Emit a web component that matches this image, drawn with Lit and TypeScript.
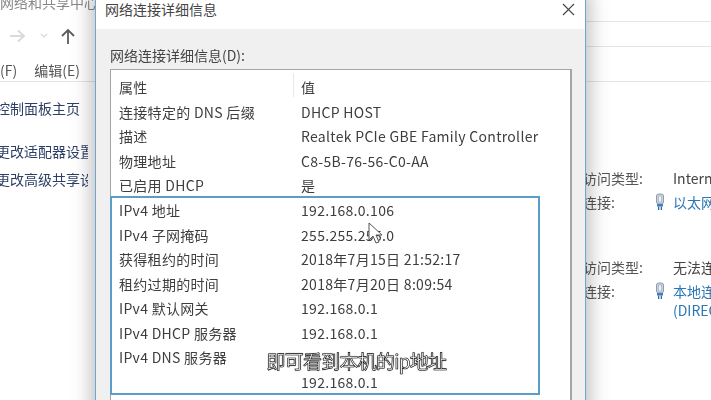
import { LitElement, html, css, svg } from "lit";
import { customElement } from "lit/decorators.js";

const topRows: [string, string][] = [
  ["连接特定的 DNS 后缀", "DHCP HOST"],
  ["描述", "Realtek PCIe GBE Family Controller"],
  ["物理地址", "C8-5B-76-56-C0-AA"],
  ["已启用 DHCP", "是"],
];
const selRows: [string, string][] = [
  ["IPv4 地址", "192.168.0.106"],
  ["IPv4 子网掩码", "255.255.255.0"],
  ["获得租约的时间", "2018年7月15日 21:52:17"],
  ["租约过期的时间", "2018年7月20日 8:09:54"],
  ["IPv4 默认网关", "192.168.0.1"],
  ["IPv4 DHCP 服务器", "192.168.0.1"],
  ["IPv4 DNS 服务器", ""],
  ["", "192.168.0.1"],
];

const plug = svg`<svg class="plug" viewBox="0 0 10 18" width="10" height="18">
  <rect x="1.5" y="1" width="7" height="10" rx="2" fill="#c9d3de" stroke="#8f9dae" stroke-width="1"/>
  <rect x="3.5" y="3" width="3" height="6" fill="#eef2f6" stroke="#9aa8b8" stroke-width=".6"/>
  <path d="M2 11h6v2.5H2z" fill="#3f7fc0"/>
  <path d="M3 13.5h1.3V17H3zM5.7 13.5H7V17H5.7z" fill="#2f6aa8"/>
</svg>`;

@customElement("app-root")
export class AppRoot extends LitElement {
  static styles = css`
    :host {
      display: block;
      position: relative;
      width: 711px;
      height: 400px;
      overflow: hidden;
      background: #fff;
      font-family: "Noto Sans CJK SC", "Liberation Sans", sans-serif;
      font-size: 14px;
      color: #3a3a3a;
    }
    .scene { width: 711px; height: 400px; filter: blur(0.35px); }
    .explorer { display: flex; flex-direction: column; width: 711px; height: 400px; }
    .wintitle {
      height: 22px; flex: none; box-sizing: border-box; overflow: hidden; line-height: 14px; color: #888;
      background: linear-gradient(#e4e4e4, #e4e4e4) right bottom / 200px 1px no-repeat;
    }
    .wintitle span { display: block; margin-top: -5px; }
    .nav {
      height: 25px; flex: none; box-sizing: border-box; padding-left: 9px; padding-top: 2px;
      background: linear-gradient(#e4e4e4, #e4e4e4) right bottom / 200px 1px no-repeat;
    }
    .nav svg { display: block; }
    .menu {
      height: 35px; flex: none; box-sizing: border-box; border-bottom: 1px solid #e4e4e4;
      display: flex; align-items: center; gap: 17px; padding-top: 11px; color: #555;
    }
    .body { flex: 1; display: flex; }
    .side {
      width: 587px; flex: none; color: #2c3f66; display: flex; flex-direction: column;
      padding-top: 16px; margin-left: -4px; line-height: 20px;
    }
    .side div { margin-bottom: 8px; white-space: nowrap; width: 92px; overflow: hidden; }
    .side .first { margin-bottom: 23px; }
    .conn { padding-top: 84px; white-space: nowrap; flex: none; }
    .group {
      display: grid; grid-template-columns: 72px 18px auto; grid-auto-rows: 24px;
      align-items: center;
    }
    .group + .group { margin-top: 41px; }
    .lbl { color: #555; }
    .val { grid-column: 3; color: #444; }
    .ic { display: flex; align-items: center; }
    a { color: #2b77b5; }
    .sub { grid-column: 3; color: #2b77b5; line-height: 16px; margin-top: -10px; }

    .dialog {
      position: absolute; left: 95px; top: -4px; width: 491px; height: 420px;
      box-sizing: border-box; background: #f0f0f0; border: 1px solid #6fa6cf;
      box-shadow: 0 0 18px 4px rgba(0,0,0,.26);
      display: flex; flex-direction: column;
    }
    .dtitle {
      height: 32px; flex: none; background: #fff; display: flex; align-items: center;
      justify-content: space-between; padding: 0 10px 8px 9px; box-sizing: border-box;
      color: #444;
    }
    .dtitle svg { display: block; }
    .dbody { padding: 16px 14px 0; flex: 1; display: flex; flex-direction: column; }
    .dlabel { line-height: 20px; height: 24px; flex: none; color: #444; }
    .list {
      flex: 1; background: #fff; border: 1px solid #a5a5a5; border-right-width: 2px; border-bottom: 0;
      width: 462px; box-sizing: border-box;
      letter-spacing: .3px; color: #3e3e3e;
    }
    .row {
      display: grid; grid-template-columns: 182px 1fr; padding-left: 8px; height: 24.5px;
      line-height: 24.5px; white-space: nowrap;
    }
    .row.head { height: 29.5px; line-height: 34px; position: relative; }
    .row.head i {
      position: absolute; left: 182px; top: 3px; bottom: 3px; width: 1px; background: #e8e8e8;
    }
    .sel {
      width: 430px; box-sizing: border-box; border: 2px solid #5b9cc9;
      margin-top: -1.5px; margin-left: -1px; height: 199px;
    }
    .sel .row { padding-left: 7px; }

    .caption {
      position: absolute; left: 0; right: 0; top: 348px; text-align: center;
      font-size: 19px; line-height: 26px; color: #fff; letter-spacing: -.75px;
      -webkit-text-stroke: .6px #111; padding-left: 2px;
      text-shadow: 0 0 1px #000;
    }
    .cursor { position: absolute; left: 368px; top: 222px; }
  `;

  private row(r: [string, string]) {
    return html`<div class="row"><span>${r[0]}</span><span>${r[1]}</span></div>`;
  }

  render() {
    return html`
      <div class="scene">
        <div class="explorer">
          <div class="wintitle"><span>网络和共享中心</span></div>
          <div class="nav">
            <svg width="68" height="22" viewBox="0 0 68 22">
              <path d="M1 12h13M9 6.5l6 5.5-6 5.5" fill="none" stroke="#dadada" stroke-width="2"/>
              <path d="M32 10l3 3 3-3" fill="none" stroke="#d8d8d8" stroke-width="1.2"/>
              <path d="M59 20V6M53 12l6-6 6 6" fill="none" stroke="#5c5c5c" stroke-width="1.8"/>
            </svg>
          </div>
          <div class="menu"><span>(F)</span><span>编辑(E)</span></div>
          <div class="body">
            <div class="side">
              <div class="first">控制面板主页</div>
              <div>更改适配器设置</div>
              <div>更改高级共享设置</div>
            </div>
            <div class="conn">
              <div class="group">
                <span class="lbl">访问类型:</span><span class="val">Internet</span>
                <span class="lbl">连接:</span><span class="ic">${plug}</span><a>以太网</a>
              </div>
              <div class="group">
                <span class="lbl">访问类型:</span><span class="val">无法连接到网络</span>
                <span class="lbl">连接:</span><span class="ic">${plug}</span><a>本地连接</a>
                <span class="sub">(DIRECT)</span>
              </div>
            </div>
          </div>
        </div>

        <div class="dialog">
          <div class="dtitle">
            <span>网络连接详细信息</span>
            <svg width="13" height="13" viewBox="0 0 13 13"><path d="M1 1l11 11M12 1L1 12" stroke="#444" stroke-width="1.2" fill="none"/></svg>
          </div>
          <div class="dbody">
            <div class="dlabel">网络连接详细信息(D):</div>
            <div class="list">
              <div class="row head"><span>属性</span><span>值</span><i></i></div>
              ${topRows.map((r) => this.row(r))}
              <div class="sel">${selRows.map((r) => this.row(r))}</div>
            </div>
          </div>
        </div>

        <svg class="cursor" width="16" height="24" viewBox="0 0 16 24">
          <path d="M1 1v17l4-4 3 7 3-1-3-7h6z" fill="#fff" stroke="#555" stroke-width="1"/>
        </svg>
        <div class="caption">即可看到本机的ip地址</div>
      </div>
    `;
  }
}
